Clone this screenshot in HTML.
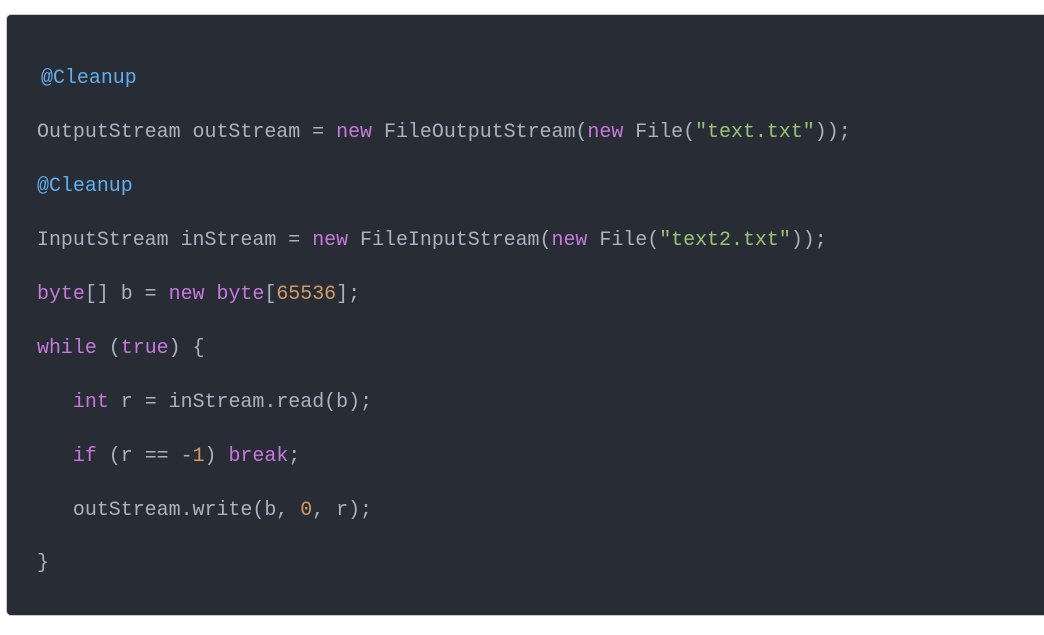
<!DOCTYPE html>
<html><head><meta charset="utf-8"><style>
html,body{margin:0;padding:0;background:#fff;width:1044px;height:635px;overflow:hidden}
.box{position:absolute;left:6px;top:14px;width:1050px;height:602px;background:#282c34;border:1px solid #c8c8c8;border-radius:5px;box-sizing:border-box}
.l{position:absolute;left:30px;font-family:"Liberation Mono","Noto Sans CJK SC",monospace;font-size:19.95px;line-height:24px;color:#abb2bf;white-space:pre}
.k{color:#c678dd}.s{color:#98c379}.n{color:#d19a66}.a{color:#61aeee}
</style></head><body><div class="box">
<div class="l" style="top:51px;left:34px"><span class="a">@Cleanup</span></div>
<div class="l" style="top:105px">OutputStream outStream = <span class="k">new</span> FileOutputStream(<span class="k">new</span> File(<span class="s">"text.txt"</span>));</div>
<div class="l" style="top:159px"><span class="a">@Cleanup</span></div>
<div class="l" style="top:213px">InputStream inStream = <span class="k">new</span> FileInputStream(<span class="k">new</span> File(<span class="s">"text2.txt"</span>));</div>
<div class="l" style="top:267px"><span class="k">byte</span>[] b = <span class="k">new</span> <span class="k">byte</span>[<span class="n">65536</span>];</div>
<div class="l" style="top:321px"><span class="k">while</span> (<span class="k">true</span>) {</div>
<div class="l" style="top:375px">   <span class="k">int</span> r = inStream.read(b);</div>
<div class="l" style="top:429px">   <span class="k">if</span> (r == -<span class="n">1</span>) <span class="k">break</span>;</div>
<div class="l" style="top:483px">   outStream.write(b, <span class="n">0</span>, r);</div>
<div class="l" style="top:536px">}</div>
</div></body></html>
